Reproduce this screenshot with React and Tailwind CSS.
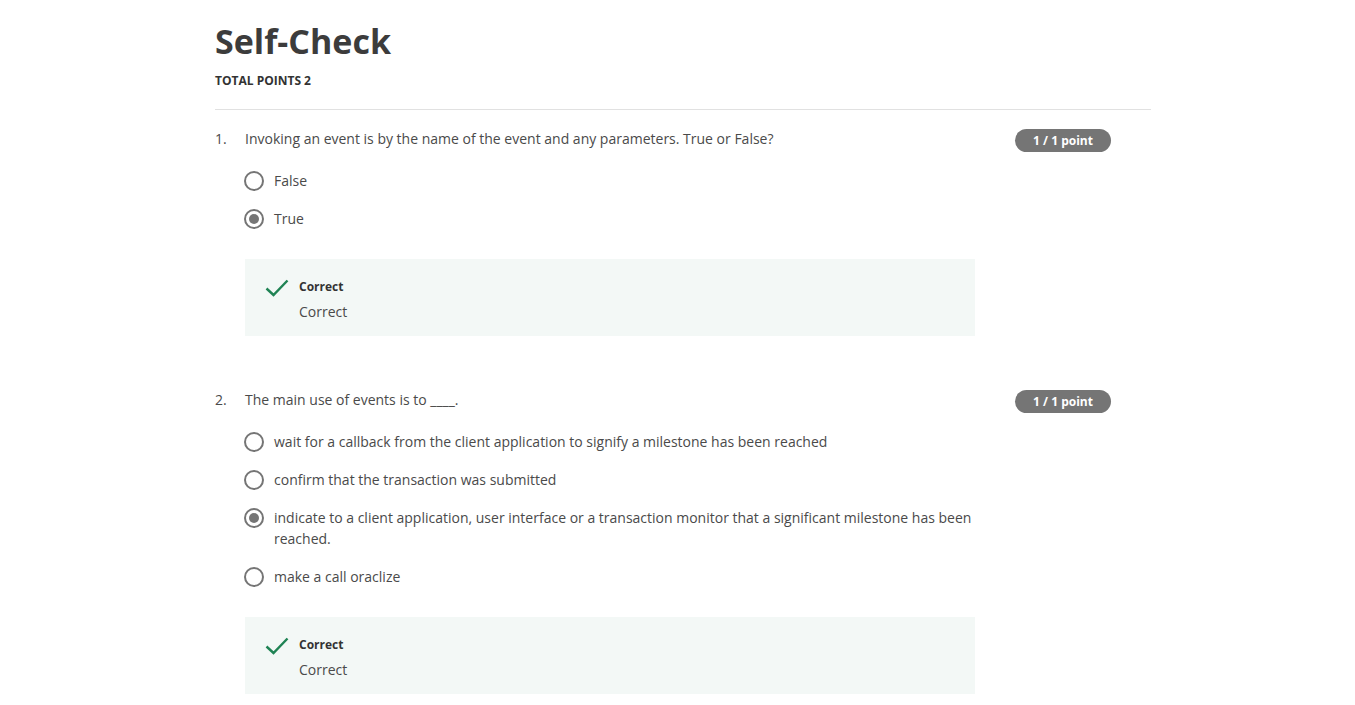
import React from 'react';

const questions = [
  {
    number: '1.',
    text: 'Invoking an event is by the name of the event and any parameters. True or False?',
    options: ['False', 'True'],
    selected: 1
  },
  {
    number: '2.',
    text: 'The main use of events is to ____.',
    options: [
      'wait for a callback from the client application to signify a milestone has been reached',
      'confirm that the transaction was submitted',
      'indicate to a client application, user interface or a transaction monitor that a significant milestone has been reached.',
      'make a call oraclize'
    ],
    selected: 2
  }
];

const Radio = ({ checked }) => (
  <span className="mt-[0.5px] flex size-5 shrink-0 items-center justify-center rounded-full border-2 border-[#757575] bg-white">
    {checked ? <span className="size-[10px] rounded-full bg-[#757575]" /> : null}
  </span>
);

const CheckIcon = () => (
  <svg width="24" height="20" viewBox="0 0 24 20" fill="none" className="shrink-0">
    <path d="M1.5 10.5 L8.5 17 L22.5 2.5" stroke="#1f8354" strokeWidth="2.4" />
  </svg>
);

const Question = ({ question }) => (
  <div>
    <div className="flex items-start justify-between pr-[40px]">
      <div className="flex text-sm leading-5 text-[#4a4a4a]">
        <span className="w-[30px] shrink-0">{question.number}</span>
        <span>{question.text}</span>
      </div>
      <span className="flex h-[23px] w-[96px] items-center justify-center rounded-full bg-[#757575] text-xs font-bold text-white">
        1 / 1 point
      </span>
    </div>

    <div className="mt-[9px] pl-[29px]">
      {question.options.map((option, index) => (
        <div key={option} className="flex items-start gap-[10px] pb-[8px] pt-[9px]">
          <Radio checked={index === question.selected} />
          <span className="max-w-[705px] text-sm leading-[21px] text-[#4a4a4a]">{option}</span>
        </div>
      ))}
    </div>

    <div className="ml-[30px] mt-[22px] flex h-[77px] w-[730px] gap-[10px] bg-[#f3f8f6] pl-[20px] pt-[19px]">
      <CheckIcon />
      <div>
        <div className="text-xs font-bold leading-[18px] text-[#333]">Correct</div>
        <div className="mt-[6px] text-sm leading-5 text-[#4a4a4a]">Correct</div>
      </div>
    </div>
  </div>
);

export default function App() {
  return (
    <div className="min-h-screen bg-white font-['Open_Sans',sans-serif]">
      <div className="ml-[215px] w-[936px] pt-[17px]">
        <h1 className="text-[34px] font-bold leading-[48px] text-[#3c3c3c]">Self-Check</h1>
        <div className="mt-[8px] text-xs font-bold leading-4 text-[#333]">TOTAL POINTS 2</div>
        <div className="mt-[20px] h-px bg-[#e1e1e1]" />

        <div className="mt-[19px] space-y-[54px]">
          {questions.map((question) => (
            <Question key={question.number} question={question} />
          ))}
        </div>
      </div>
    </div>
  );
}
